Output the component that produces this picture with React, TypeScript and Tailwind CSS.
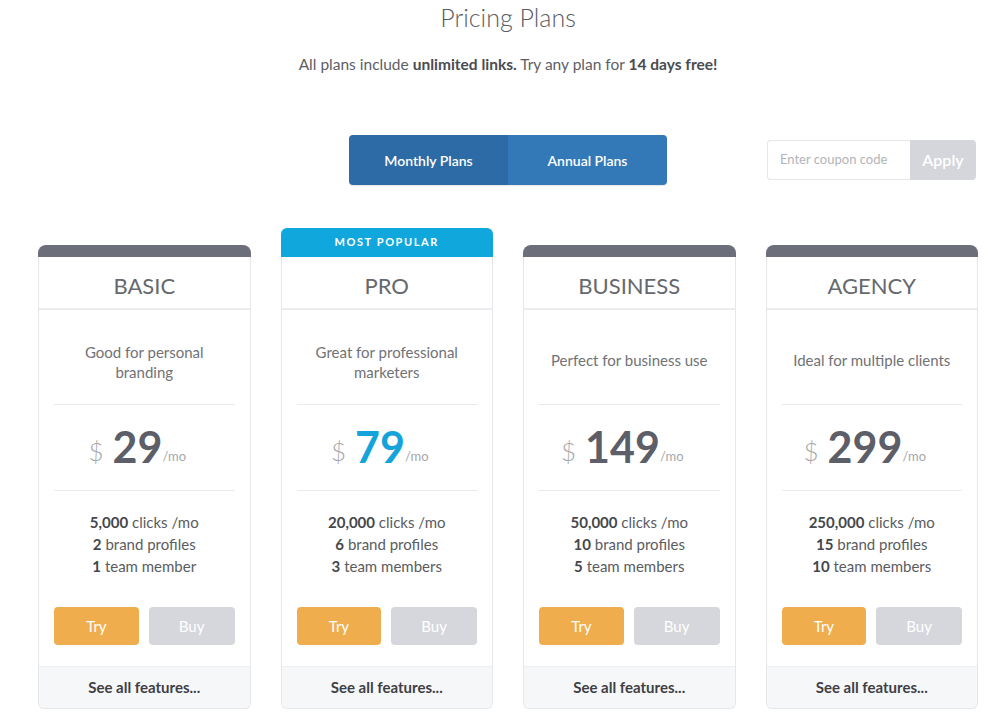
import React from "react";

type Plan = {
  name: string;
  desc: string[];
  price: string;
  features: [string, string][];
  popular?: boolean;
};

const plans: Plan[] = [
  {
    name: "BASIC",
    desc: ["Good for personal", "branding"],
    price: "29",
    features: [
      ["5,000", "clicks /mo"],
      ["2", "brand profiles"],
      ["1", "team member"],
    ],
  },
  {
    name: "PRO",
    desc: ["Great for professional", "marketers"],
    price: "79",
    popular: true,
    features: [
      ["20,000", "clicks /mo"],
      ["6", "brand profiles"],
      ["3", "team members"],
    ],
  },
  {
    name: "BUSINESS",
    desc: ["Perfect for business use"],
    price: "149",
    features: [
      ["50,000", "clicks /mo"],
      ["10", "brand profiles"],
      ["5", "team members"],
    ],
  },
  {
    name: "AGENCY",
    desc: ["Ideal for multiple clients"],
    price: "299",
    features: [
      ["250,000", "clicks /mo"],
      ["15", "brand profiles"],
      ["10", "team members"],
    ],
  },
];

function Card({ plan }: { plan: Plan }) {
  return (
    <div className="w-[212.5px] flex flex-col">
      {plan.popular ? (
        <div className="h-[29px] bg-[#10a7dd] rounded-t-[6px] flex items-center justify-center text-white text-[11px] font-bold tracking-[1.6px]">
          MOST POPULAR
        </div>
      ) : (
        <div className="mt-[17px] h-[12px] bg-[#6c6f79] rounded-t-[8px]" />
      )}
      <div className="border-x border-b border-[#e6e7ea] rounded-b-[6px] bg-white flex flex-col">
        <div className="h-[53px] pt-[6px] border-b-2 border-[#ececee] flex items-center justify-center text-[22px] text-[#66686d]">
          {plan.name}
        </div>
        <div
          className={`mx-[15px] h-[95px] border-b border-[#eaeaec] flex flex-col items-center justify-center text-[15px] leading-[20px] text-[#707276] ${plan.desc.length > 1 ? "pt-[9px]" : "pt-[5px]"}`}
        >
          {plan.desc.map((d) => (
            <div key={d}>{d}</div>
          ))}
        </div>
        <div className="mx-[15px] h-[86px] border-b border-[#eaeaec] flex items-center justify-center pb-[2px] pr-[14px]">
          <span className="text-[26px] font-light text-[#a6a7ab] mr-[9px] mt-[10px]">$</span>
          <span
            className={`text-[43px] font-bold leading-none ${plan.popular ? "text-[#14a3da]" : "text-[#5c5e68]"}`}
          >
            {plan.price}
          </span>
          <span className="text-[13px] text-[#a6a7ab] self-end mb-[22px]">/mo</span>
        </div>
        <div className="pt-[20px] flex flex-col items-center text-[15px] leading-[22px] text-[#5a5c61]">
          {plan.features.map(([b, t]) => (
            <div key={t}>
              <span className="font-bold text-[#45474c]">{b}</span> {t}
            </div>
          ))}
        </div>
        <div className="mt-[30px] px-[15px] flex gap-[10px]">
          <button className="w-[85px] h-[38px] rounded-[4px] bg-[#f0ad4e] text-white text-[15px]">
            Try
          </button>
          <button className="w-[86px] h-[38px] rounded-[4px] bg-[#d6d7dc] text-white text-[15px]">
            Buy
          </button>
        </div>
        <div className="mt-[21px] h-[42px] bg-[#f6f7f9] border-t border-[#efeff1] rounded-b-[6px] flex items-center justify-center text-[15px] font-bold text-[#3e4045]">
          See all features...
        </div>
      </div>
    </div>
  );
}

export default function App() {
  return (
    <div
      className="w-[1002px] h-[721px] bg-white overflow-hidden pl-[14px]"
      style={{ fontFamily: "Lato, 'Open Sans', sans-serif" }}
    >
      <h1 className="pt-[1px] text-center text-[25px] font-light text-[#5a5d63] leading-[32px]">
        Pricing Plans
      </h1>
      <p className="mt-[20px] text-center text-[15.5px] text-[#5d6066] leading-[22px]">
        All plans include <b className="text-[#4a4c51]">unlimited links.</b> Try any plan for{" "}
        <b className="text-[#4a4c51]">14 days free!</b>
      </p>
      <div className="mt-[60px] h-[50px] relative flex justify-center">
        <div className="flex w-[318px] h-[50px] rounded-[4px] overflow-hidden shadow-[0_1px_1px_rgba(0,0,0,0.1)]">
          <div className="flex-1 bg-[#2d6ba6] flex items-center justify-center text-white text-[14px] font-semibold">
            Monthly Plans
          </div>
          <div className="flex-1 bg-[#3479b7] flex items-center justify-center text-white text-[14px] font-semibold">
            Annual Plans
          </div>
        </div>
        <div className="absolute left-[753px] top-[5px] flex h-[40px]">
          <div className="w-[143px] border border-[#e6e6e8] border-r-0 rounded-l-[4px] flex items-center pl-[12px] text-[13px] text-[#b3b4b8]">
            Enter coupon code
          </div>
          <div className="w-[66px] bg-[#d5d6db] rounded-r-[4px] flex items-center justify-center text-white text-[16px] font-semibold">
            Apply
          </div>
        </div>
      </div>
      <div className="mt-[43px] flex justify-center gap-[30px]">
        {plans.map((p) => (
          <Card key={p.name} plan={p} />
        ))}
      </div>
    </div>
  );
}
